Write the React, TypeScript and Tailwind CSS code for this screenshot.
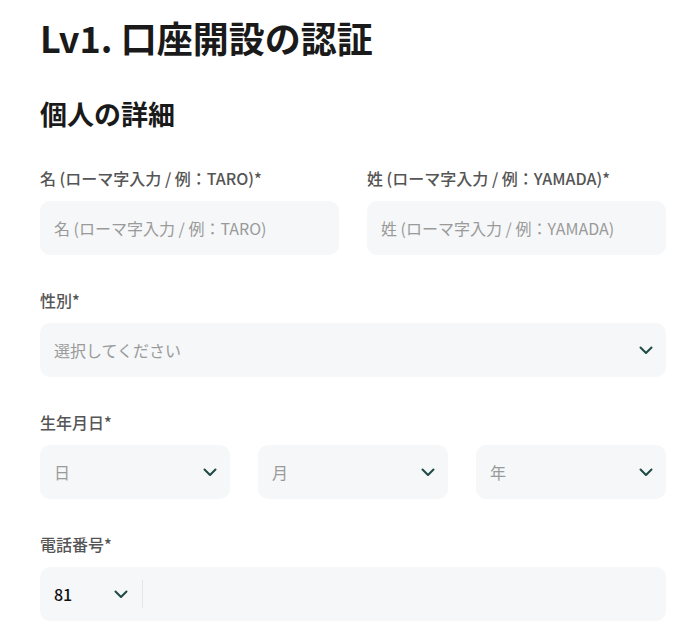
import React from 'react';

const font = { fontFamily: '"Noto Sans CJK JP", "Noto Sans", sans-serif' };

const Chevron: React.FC = () => (
  <svg width="14" height="9" viewBox="0 0 14 9" fill="none" className="shrink-0">
    <path d="M1.5 1.5L7 7L12.5 1.5" stroke="#1d4a44" strokeWidth="2" strokeLinecap="round" strokeLinejoin="round" />
  </svg>
);

const Label: React.FC<{ children: React.ReactNode }> = ({ children }) => (
  <div className="text-[16px] leading-[20px] font-medium text-[#555555] mb-[13px]">{children}</div>
);

const TextInput: React.FC<{ placeholder: string }> = ({ placeholder }) => (
  <div className="h-[54px] rounded-[10px] bg-[#f5f7f8] px-[14px] flex items-center">
    <span className="text-[16px] text-[#9a9a9a]">{placeholder}</span>
  </div>
);

const Select: React.FC<{ placeholder: string }> = ({ placeholder }) => (
  <div className="h-[54px] rounded-[10px] bg-[#f5f7f8] pl-[14px] pr-[13px] flex items-center justify-between">
    <span className="text-[16px] text-[#9a9a9a]">{placeholder}</span>
    <Chevron />
  </div>
);

const App: React.FC = () => {
  return (
    <div className="min-h-screen bg-white px-10 pt-[12px]" style={font}>
      <h1 className="text-[36px] leading-[50px] font-bold text-[#1a1a1a]">Lv1. 口座開設の認証</h1>
      <h2 className="mt-[34px] text-[27px] leading-[36px] font-bold text-[#1a1a1a]">個人の詳細</h2>

      <div className="mt-[36px] w-[626px] space-y-[35px]">
        <div className="grid grid-cols-2 gap-7">
          <div>
            <Label>名 (ローマ字入力 / 例：TARO)*</Label>
            <TextInput placeholder="名 (ローマ字入力 / 例：TARO)" />
          </div>
          <div>
            <Label>姓 (ローマ字入力 / 例：YAMADA)*</Label>
            <TextInput placeholder="姓 (ローマ字入力 / 例：YAMADA)" />
          </div>
        </div>

        <div>
          <Label>性別*</Label>
          <Select placeholder="選択してください" />
        </div>

        <div>
          <Label>生年月日*</Label>
          <div className="grid grid-cols-3 gap-7">
            <Select placeholder="日" />
            <Select placeholder="月" />
            <Select placeholder="年" />
          </div>
        </div>

        <div>
          <Label>電話番号*</Label>
          <div className="h-[54px] rounded-[10px] bg-[#f5f7f8] pl-[14px] flex items-center">
            <span className="w-[60px] text-[16px] font-medium text-[#111111]">81</span>
            <Chevron />
            <div className="ml-[14px] h-[28px] w-px bg-[#e3e6e8]" />
          </div>
        </div>
      </div>
    </div>
  );
};

export default App;
